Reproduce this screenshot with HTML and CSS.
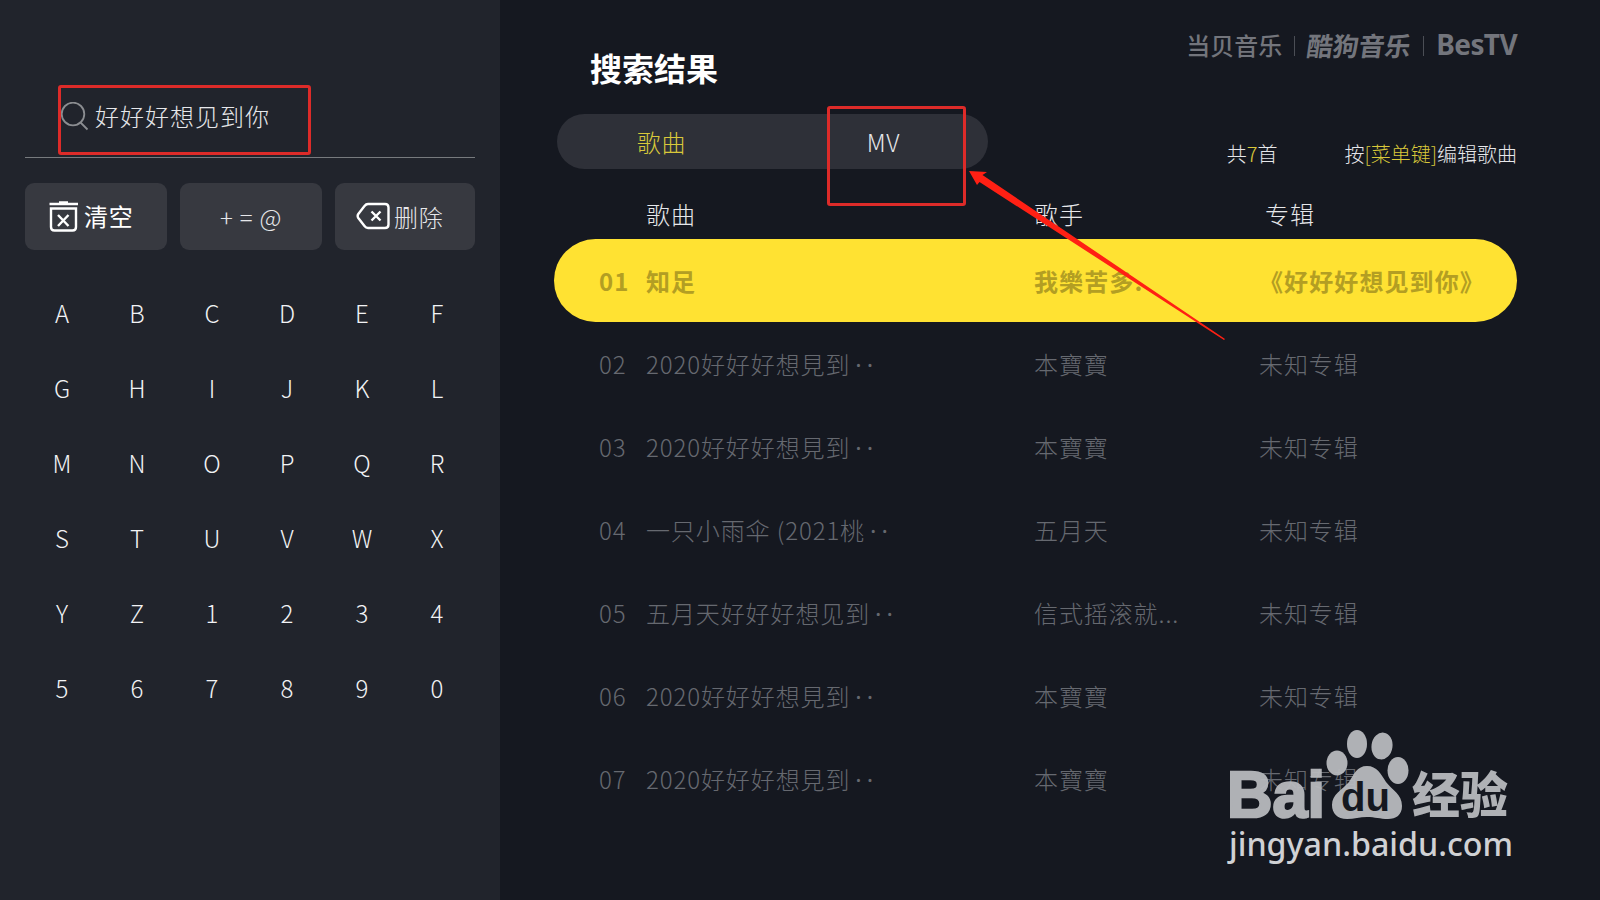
FILE: index.html
```html
<!DOCTYPE html>
<html lang="zh-CN">
<head>
    <meta charset="UTF-8">
    <meta name="viewport" content="width=device-width, initial-scale=1.0">
    <title>搜索结果</title>
    <link rel="stylesheet" href="styles.css">
</head>
<body>
    <div class="page">
        <div class="sidebar">
            <div class="search-box">
                <svg class="search-icon" width="30" height="30" viewBox="0 0 30 30">
                    <circle cx="13" cy="12" r="11.3"/>
                    <path d="M20.5 20.5L27.5 27.5"/>
                </svg>
                <span>好好好想见到你</span>
            </div>
            <div class="actions">
                <button class="action clear">
                    <svg width="30" height="32" viewBox="0 0 30 32">
                        <path d="M0.500 4H29M10 2.500H19M2 8.500H27V27Q27 30.500 23.500 30.500H5.500Q2 30.500 2 27ZM9 15L19.500 26M19.500 15L9 26"/>
                    </svg>
                    <span>清空</span>
                </button>
                <button class="action symbols">+ = @</button>
                <button class="action delete">
                    <svg width="34" height="28" viewBox="0 0 34 28">
                        <path d="M12 2H29Q32.500 2 32.500 5.500V22.500Q32.500 26 29 26H12Q10 26 8.500 24L2.300 16Q1 14 2.300 12L8.500 4Q10 2 12 2ZM15.500 9.500L24.500 18.500M24.500 9.500L15.500 18.500"/>
                    </svg>
                    <span>删除</span>
                </button>
            </div>
            <div class="keyboard">
                <span>A</span><span>B</span><span>C</span><span>D</span><span>E</span><span>F</span>
                <span>G</span><span>H</span><span>I</span><span>J</span><span>K</span><span>L</span>
                <span>M</span><span>N</span><span>O</span><span>P</span><span>Q</span><span>R</span>
                <span>S</span><span>T</span><span>U</span><span>V</span><span>W</span><span>X</span>
                <span>Y</span><span>Z</span><span>1</span><span>2</span><span>3</span><span>4</span>
                <span>5</span><span>6</span><span>7</span><span>8</span><span>9</span><span>0</span>
            </div>
        </div>

        <div class="content">
            <div class="header">
                <h1>搜索结果</h1>
                <div class="brands">
                    <span class="brand-dangbei">当贝音乐</span>
                    <i></i>
                    <span class="brand-kugou">酷狗音乐</span>
                    <i></i>
                    <span class="brand-bestv">BesTV</span>
                </div>
            </div>
            <div class="toolbar">
                <div class="tabs">
                    <div class="tab active">歌曲</div>
                    <div class="tab">MV</div>
                </div>
                <div class="info">
                    <span>共<em>7</em>首</span>
                    <span>按<em>[菜单键]</em>编辑歌曲</span>
                </div>
            </div>
            <div class="list">
                <div class="row head"><span></span><span>歌曲</span><span>歌手</span><span class="album-title">专辑</span></div>
                <div class="row selected"><span>01</span><span>知足</span><span>我樂苦多.</span><span>《好好好想见到你》</span></div>
                <div class="row"><span>02</span><span>2020好好好想見到<b>··</b></span><span>本寶寶</span><span>未知专辑</span></div>
                <div class="row"><span>03</span><span>2020好好好想見到<b>··</b></span><span>本寶寶</span><span>未知专辑</span></div>
                <div class="row"><span>04</span><span>一只小雨伞 (2021桃<b>··</b></span><span>五月天</span><span>未知专辑</span></div>
                <div class="row"><span>05</span><span>五月天好好好想见到<b>··</b></span><span>信式摇滚就...</span><span>未知专辑</span></div>
                <div class="row"><span>06</span><span>2020好好好想見到<b>··</b></span><span>本寶寶</span><span>未知专辑</span></div>
                <div class="row"><span>07</span><span>2020好好好想見到<b>··</b></span><span>本寶寶</span><span>未知专辑</span></div>
            </div>
        </div>

        <!-- red marks -->
        <div class="mark mark-search"></div>
        <div class="mark mark-mv"></div>
        <svg class="arrow" width="258" height="172" viewBox="0 0 258 172">
            <path d="M1 1L19 2L14.500 5L257 169L256 170L11.500 12L9 15Z"/>
        </svg>

        <!-- watermark -->
        <svg class="watermark" width="300" height="150" viewBox="0 0 300 150">
            <g class="wm-logo">
                <text class="wm-bai" x="7" y="97" textLength="98" lengthAdjust="spacingAndGlyphs">Bai</text>
                <ellipse cx="117" cy="43" rx="10.500" ry="12.500"/>
                <ellipse cx="137" cy="24" rx="10" ry="14"/>
                <ellipse cx="162" cy="26" rx="10.500" ry="13.500" transform="rotate(8 162 26)"/>
                <ellipse cx="178" cy="50.500" rx="10.500" ry="13.500"/>
                <path d="M147 46C157 46 161 54 166 62C172 70 182 74 182 86C182 95 176 99 168 99C160 99 155 97 147 97C140 97 134 99 127 99C117 99 112 93 112 85C112 74 122 70 129 62C134 54 137 46 147 46Z"/>
                <text class="wm-jy" x="192" y="93" textLength="96" lengthAdjust="spacingAndGlyphs">经验</text>
            </g>
            <text class="wm-du" x="121" y="91" textLength="49" lengthAdjust="spacingAndGlyphs">du</text>
            <text class="wm-url" x="9" y="135.500" textLength="284" lengthAdjust="spacingAndGlyphs">jingyan.baidu.com</text>
        </svg>
    </div>
</body>
</html>
```
FILE: styles.css
```css
* {
    box-sizing: border-box;
}
body {
    margin: 0;
    background: #151820;
    font-family: "Noto Sans CJK SC", "Noto Sans", sans-serif;
    font-weight: 300;
    color: #e6e7ea;
}
.page {
    position: relative;
    display: flex;
    width: 1600px;
    height: 900px;
    overflow: hidden;
}
.sidebar {
    width: 500px;
    padding: 77px 25px 0;
    background: #21242c;
}
.search-box {
    display: flex;
    align-items: center;
    height: 81px;
    padding-left: 35px;
    border-bottom: 1px solid #777a7e;
    font-size: 24px;
    letter-spacing: 1px;
}
.search-box span {
    padding-bottom: 4px;
}
.search-icon {
    margin-right: 5px;
    fill: none;
    stroke: #8b8d91;
    stroke-width: 1.8;
}
.actions {
    display: grid;
    grid-template-columns: 142px 142px 140px;
    gap: 13px;
    margin-top: 25px;
}
.action {
    display: flex;
    align-items: center;
    height: 67px;
    padding: 0;
    border: none;
    border-radius: 9px;
    background: #373940;
    color: #e6e7ea;
    font-family: inherit;
    font-size: 24px;
    font-weight: 300;
    letter-spacing: 0.8px;
}
.action svg {
    fill: none;
    stroke: #fff;
    stroke-width: 2.4;
}
.clear {
    padding-left: 24px;
    gap: 5px;
    font-weight: 400;
    color: #fff;
}
.clear svg, .clear span {
    margin-bottom: 2px;
}
.symbols {
    justify-content: center;
    font-size: 24px;
}
.delete {
    padding-left: 21px;
    gap: 4px;
}
.delete svg {
    margin-bottom: 2px;
}
.keyboard {
    display: grid;
    grid-template-columns: repeat(6, 75px);
    grid-auto-rows: 75px;
    margin-top: 25px;
}
.keyboard span {
    display: flex;
    align-items: center;
    justify-content: center;
    padding-right: 1px;
    font-size: 24px;
    color: #f2f3f5;
}
.content {
    flex: 1;
    padding: 29px 83px 0 54px;
}
.header {
    display: flex;
    justify-content: space-between;
    height: 85px;
}
h1 {
    margin: 13px 0 0 36px;
    font-size: 32px;
    line-height: 50px;
    font-weight: 700;
    color: #fff;
}
.brands {
    display: flex;
    align-items: center;
    height: 34px;
    color: #73757c;
    font-size: 24px;
    font-weight: 500;
}
.brands span {
    margin-bottom: 4px;
}
.brands i {
    width: 1px;
    height: 20px;
    margin: 0 12px;
    background: #4b4e55;
}
.brand-kugou {
    font-weight: 700;
    font-size: 26px;
    transform: skewX(-8deg);
}
.brand-bestv {
    font-family: "Noto Sans", sans-serif;
    font-weight: 700;
    font-size: 28px;
    letter-spacing: -0.6px;
}
.toolbar {
    display: flex;
    justify-content: space-between;
    height: 77px;
    padding-left: 3px;
}
.tabs {
    display: flex;
    width: 431px;
    height: 55px;
    border-radius: 28px;
    background: #2e3038;
    font-size: 24px;
}
.tab {
    flex: 1;
    padding-right: 7px;
    line-height: 55px;
    text-align: center;
    letter-spacing: 0.8px;
}
.tab:last-child {
    padding: 0 0 0 6px;
}
.active, em {
    color: #d9c83a;
    font-style: normal;
}
.info {
    display: flex;
    gap: 67px;
    font-size: 20px;
    line-height: 80px;
}
.row {
    display: grid;
    grid-template-columns: 47px 388px 225px 1fr;
    align-items: center;
    height: 83px;
    padding-left: 45px;
    color: #666970;
    font-size: 24px;
    letter-spacing: 0.9px;
    white-space: nowrap;
}
.row b {
    margin-left: 5px;
    font-family: "Noto Sans", sans-serif;
    font-weight: 400;
    letter-spacing: 5px;
}
.head {
    height: 48px;
    padding-bottom: 4px;
    color: #e6e7ea;
}
.album-title {
    padding-left: 6px;
}
.selected {
    border-radius: 42px;
    background: #ffe232;
    color: #b39e23;
    font-weight: 700;
    letter-spacing: 1.1px;
}
.mark {
    position: absolute;
    border: 3px solid #dd2b29;
    border-radius: 3px;
}
.mark-search {
    left: 58px;
    top: 85px;
    width: 253px;
    height: 70px;
}
.mark-mv {
    left: 827px;
    top: 106px;
    width: 139px;
    height: 100px;
}
.arrow {
    position: absolute;
    left: 968px;
    top: 170px;
    fill: #ff2014;
}
.watermark {
    position: absolute;
    left: 1220px;
    top: 720px;
}
.wm-logo {
    fill: #b9bbbf;
    opacity: 0.94;
}
.wm-bai {
    font-family: "Liberation Sans", sans-serif;
    font-weight: 700;
    font-size: 65px;
    stroke: #b9bbbf;
    stroke-width: 2.5;
}
.wm-du {
    font-family: "Liberation Sans", sans-serif;
    font-weight: 700;
    font-size: 41px;
    fill: #151820;
}
.wm-jy {
    font-weight: 900;
    font-size: 49px;
}
.wm-url {
    font-family: "Noto Sans", sans-serif;
    font-weight: 500;
    font-size: 33px;
    fill: #d0d1d4;
}
```
